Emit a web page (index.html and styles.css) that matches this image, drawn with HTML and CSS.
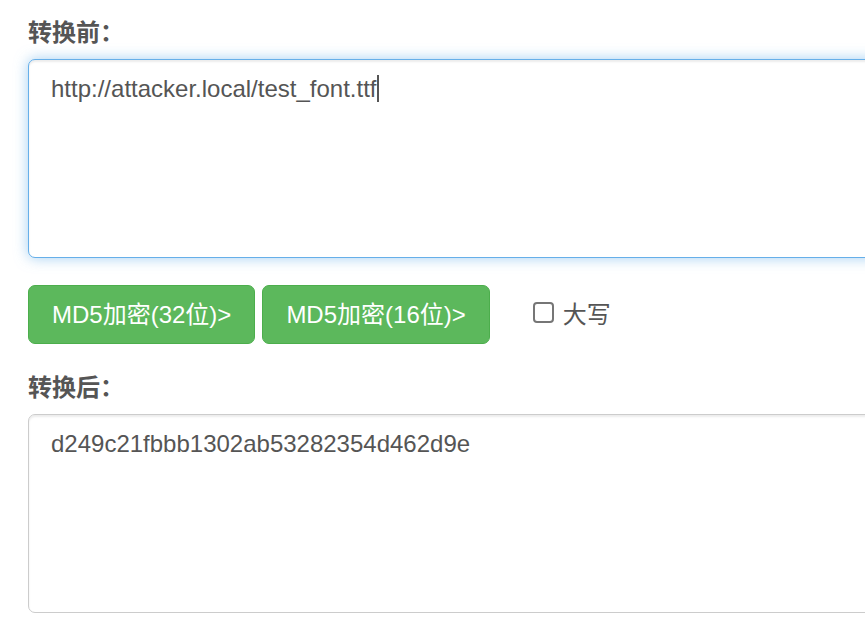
FILE: index.html
```html
<!DOCTYPE html>
<html lang="zh-CN">
<head>
<meta charset="utf-8">
<title>MD5加密</title>
<link rel="stylesheet" href="styles.css">
</head>
<body>
<form class="converter">
  <label class="field-label" for="source">转换前：</label>
  <div class="field-box">
    <textarea class="field" id="source" autofocus spellcheck="false">http://attacker.local/test_font.ttf</textarea>
    <span class="caret"></span>
  </div>
  <div class="actions">
    <button class="btn" type="button">MD5加密(32位)&gt;</button>
    <button class="btn" type="button">MD5加密(16位)&gt;</button>
    <label class="option"><input class="check" type="checkbox">大写</label>
  </div>
  <label class="field-label" for="result">转换后：</label>
  <div class="field-box">
    <textarea class="field" id="result" spellcheck="false">d249c21fbbb1302ab53282354d462d9e</textarea>
  </div>
</form>
<script src="script.js"></script>
</body>
</html>
```
FILE: styles.css
```css
* { box-sizing: border-box; }
body {
  margin: 0;
  overflow: hidden;
  background: #fff;
  color: #555;
  font: 24px/36px "Liberation Sans", "Noto Sans CJK SC", sans-serif;
}
.converter {
  display: flex;
  flex-direction: column;
  padding: 15px 0 16px 28px;
  margin-right: -24px;
}
.field-label {
  margin-bottom: 8px;
  font-weight: 700;
}
.field-box {
  position: relative;
}
.field {
  display: block;
  width: 100%;
  height: 199px;
  padding: 11px 22px;
  border: 1px solid #ccc;
  border-radius: 7px;
  background: #fff;
  box-shadow: inset 0 2px 2px rgba(0, 0, 0, .075);
  color: #555;
  caret-color: transparent;
  font: inherit;
  resize: none;
  outline: 0;
}
.field:focus {
  border-color: #66afe9;
  box-shadow: inset 0 2px 2px rgba(0, 0, 0, .075), 0 0 14px rgba(102, 175, 233, .6);
}
.caret {
  position: absolute;
  top: 16px;
  left: 349px;
  width: 2px;
  height: 27px;
  background: #555;
  pointer-events: none;
}
.actions {
  display: flex;
  align-items: center;
  gap: 7px;
  margin: 27px 0 26px;
}
.btn {
  height: 59px;
  padding: 0 23px;
  border: 1px solid #4cae4c;
  border-radius: 7px;
  background: #5cb85c;
  color: #fff;
  font: inherit;
}
.option {
  display: flex;
  align-items: center;
  gap: 9px;
  margin-left: 36px;
}
.check {
  appearance: none;
  width: 21px;
  height: 21px;
  margin: 0 0 4px;
  border: 2px solid #767676;
  border-radius: 4px;
  background: #fff;
}
.check:checked {
  border-color: #0075ff;
  background: #0075ff;
}
```
FILE: script.js
```js
const source = document.getElementById("source");
source.focus();
source.setSelectionRange(source.value.length, source.value.length);
```
